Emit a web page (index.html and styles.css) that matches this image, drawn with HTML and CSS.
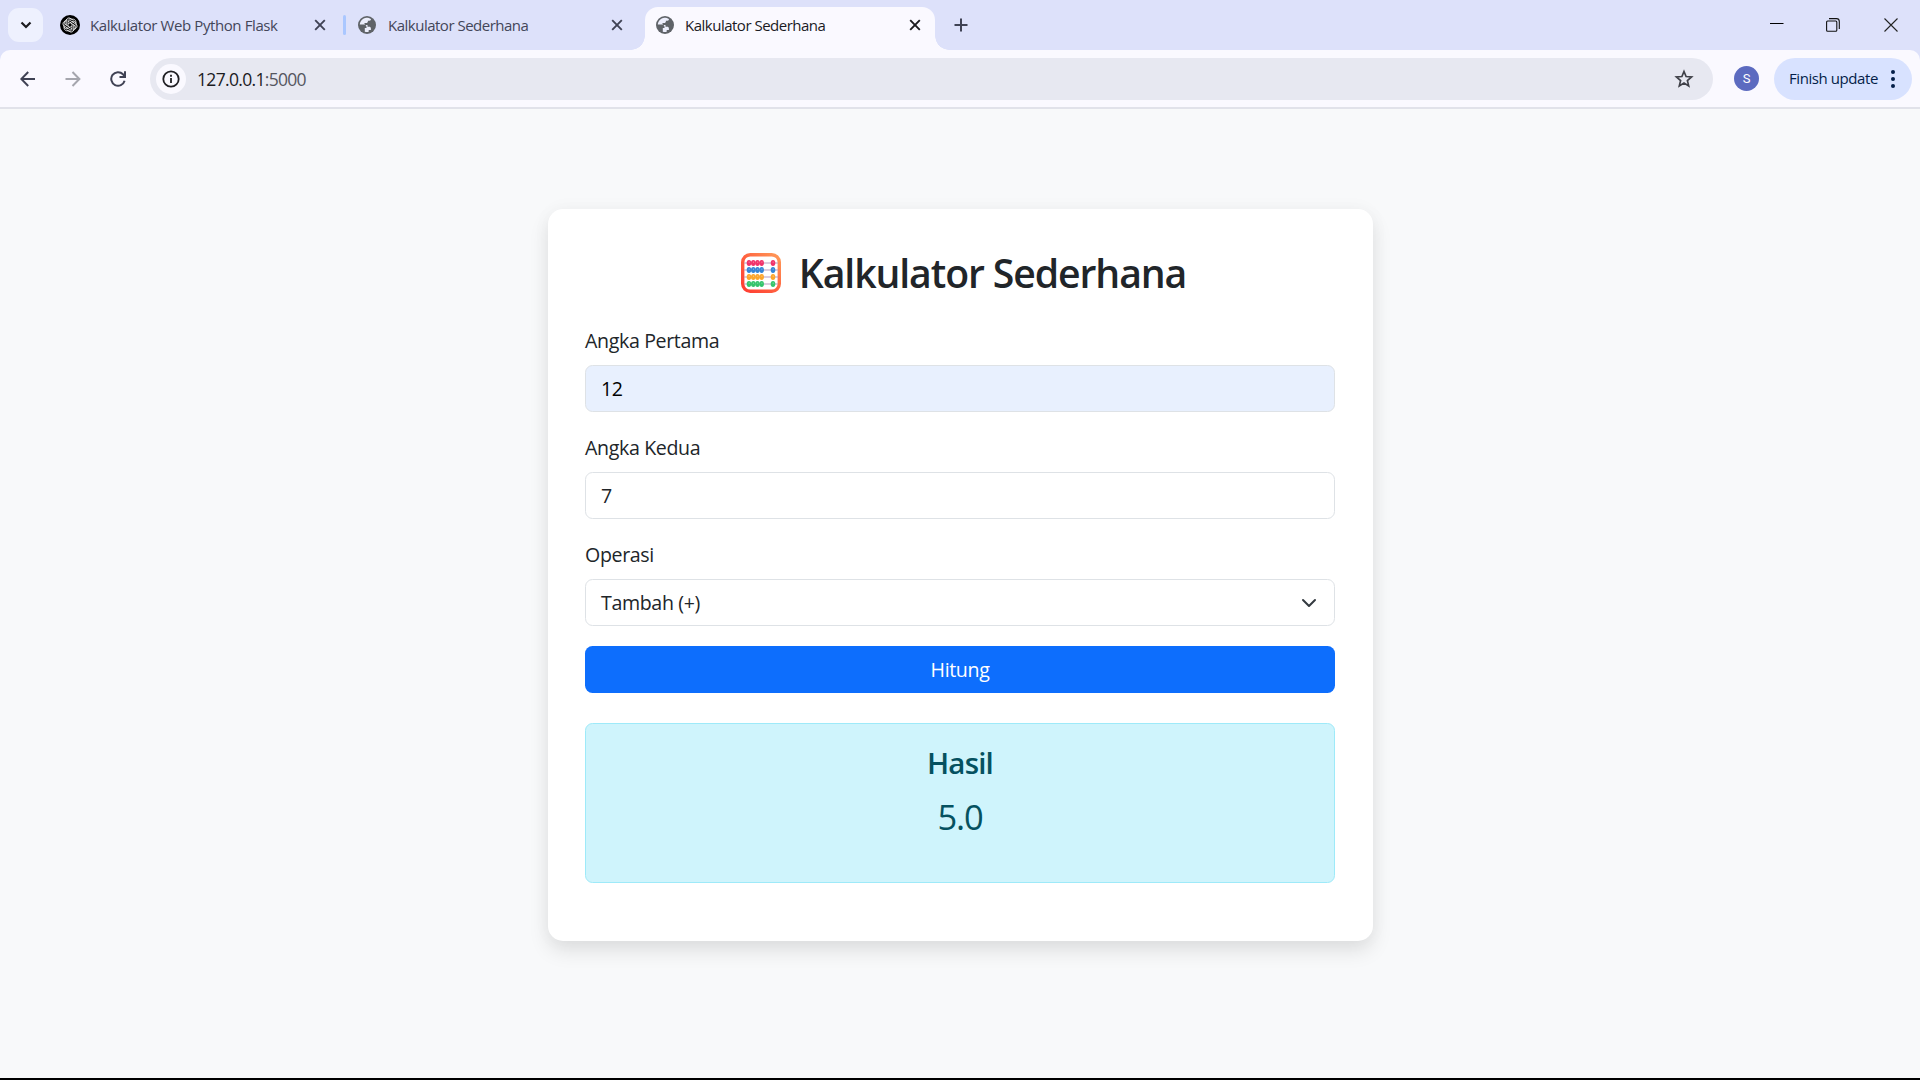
FILE: index.html
```html
<!DOCTYPE html>
<html lang="id">
<head>
<meta charset="utf-8">
<title>Kalkulator Sederhana</title>
<link rel="stylesheet" href="styles.css">
</head>
<body>
<svg width="0" height="0" class="defs">
  <defs>
    <symbol id="x" viewBox="0 0 12 12"><path d="M1.2 1.2l9.6 9.6M10.8 1.2l-9.6 9.6" fill="none" stroke="currentColor" stroke-width="1.9"/></symbol>
    <symbol id="globe" viewBox="0 0 18 18"><circle cx="9" cy="9" r="9" fill="#5f6368"/><path d="M7.4 1.9C4.4 2.5 2 5.2 1.8 8.6h4.1c1.5 0 2.6 1.1 2.6 2.5v.8H6.8v3.8c.7.3 1.5.4 2.2.4.6 0 1.1-.1 1.7-.3v-1.7h2.2v-1.7c0-1-.7-1.7-1.7-1.7H9.5V8.900h-3V7.100h1.700c1 0 1.700-.6 1.700-1.500v-.900h1.500c1.100 0 1.600-.7 1.500-1.600-1.600-1.100-3.700-1.500-5.500-1.200z" fill="#eceefc"/></symbol>
    <linearGradient id="frame" x1="0" y1="1" x2="1" y2="0"><stop offset="0" stop-color="#ff3c32"/><stop offset=".5" stop-color="#ff6240"/><stop offset="1" stop-color="#ff9a58"/></linearGradient>
    <g id="beads"><path d="M3 0H37" stroke="#b79cc0" stroke-width="1.2"/><g fill="currentColor"><ellipse cx="8" cy="0" rx="2.300" ry="3"/><ellipse cx="12.300" cy="0" rx="2.300" ry="3"/><ellipse cx="16.500" cy="0" rx="2.300" ry="3"/><ellipse cx="20.700" cy="0" rx="2.300" ry="3"/><ellipse cx="32" cy="0" rx="2.300" ry="3"/></g><path d="M8.200-1.500v1.500M12.500-1.500v1.500M16.700-1.500v1.500M20.900-1.500v1.500M32.200-1.500v1.500" stroke="#fff" stroke-opacity=".3"/></g>
  </defs>
</svg>
<header class="browser">
  <div class="tabstrip">
    <button class="tab-search"><svg width="12" height="8" viewBox="0 0 12 8"><path d="M1.500 1.500L6 6l4.500-4.500" fill="none" stroke="#1b1b1f" stroke-width="2.200"/></svg></button>
    <div class="tab tab-first">
      <svg class="favicon" width="20" height="20" viewBox="0 0 20 20"><circle cx="10" cy="10" r="10"/><g fill="none" stroke="#fff" stroke-width=".8"><path id="petal" d="M8 10.900V6.500c0-3 4-3.700 5.200-1.300M8 6.700l3.700-2.100c2.700-1.400 5 1.300 3.900 3.500"/><use href="#petal" transform="rotate(60 10 10)"/><use href="#petal" transform="rotate(120 10 10)"/><use href="#petal" transform="rotate(180 10 10)"/><use href="#petal" transform="rotate(240 10 10)"/><use href="#petal" transform="rotate(300 10 10)"/></g></svg>
      <span class="tab-title">Kalkulator Web Python Flask</span>
      <svg class="close" width="12" height="12"><use href="#x"/></svg>
    </div>
    <i class="divider"></i>
    <div class="tab tab-second">
      <svg class="favicon" width="18" height="18"><use href="#globe"/></svg>
      <span class="tab-title">Kalkulator Sederhana</span>
      <svg class="close" width="12" height="12"><use href="#x"/></svg>
    </div>
    <div class="tab tab-active">
      <svg class="favicon" width="18" height="18"><use href="#globe"/></svg>
      <span class="tab-title">Kalkulator Sederhana</span>
      <svg class="close" width="12" height="12"><use href="#x"/></svg>
    </div>
    <svg class="new-tab" width="14" height="14" viewBox="0 0 14 14"><path d="M7 .5v13M.5 7h13" stroke="#3f4254" stroke-width="2"/></svg>
    <div class="window-controls">
      <svg width="14" height="14" viewBox="0 0 14 14"><path d="M0 5.500h13.500" stroke="#000"/></svg>
      <svg width="14" height="14" viewBox="0 0 14 14"><g fill="none" stroke="#111" stroke-width="1.100"><rect x=".6" y="3" width="10.200" height="10.200" rx="1"/><path d="M3 .6h7.500a2.800 2.800 0 0 1 2.800 2.800V11"/></g></svg>
      <svg class="window-close" width="14" height="14" viewBox="0 0 14 14"><path d="M.5.500l13 13M13.500.500l-13 13" stroke="#222" stroke-width="1.100"/></svg>
    </div>
  </div>
  <div class="toolbar">
    <svg class="nav" width="16" height="16" viewBox="0 0 16 16"><path d="M15 8H1.500M8.200 1L1.300 8l6.900 7" fill="none" stroke="#3f4254" stroke-width="2"/></svg>
    <svg class="nav forward" width="16" height="16" viewBox="0 0 16 16"><path d="M.5 8h13.700M7.500 1l6.900 7-6.900 7" fill="none" stroke="#a5a6ae" stroke-width="2"/></svg>
    <svg class="nav reload" width="16" height="16" viewBox="0 0 16 16"><path d="M14.600 9.800A6.800 6.800 0 1 1 13 3.300l1.300 1.500M15 .2v5.700H9.500" fill="none" stroke="#3f4254" stroke-width="2"/></svg>
    <div class="omnibox">
      <span class="site-info"><svg width="18" height="18" viewBox="0 0 18 18"><circle cx="9" cy="9" r="7.700" fill="none" stroke="#1f1f23" stroke-width="1.800"/><path d="M9 8v5M9 4.800v2" stroke="#1f1f23" stroke-width="1.800"/></svg></span>
      <span class="url">127.0.0.1<span class="port">:5000</span></span>
      <svg class="star" width="20" height="20" viewBox="0 0 20 20"><path d="M10 2.500l2.100 5 5.500.5-4.200 3.600 1.300 5.300L10 14.100l-4.700 2.800 1.300-5.300L2.400 8l5.500-.5z" fill="none" stroke="#3f4048" stroke-width="1.700"/></svg>
    </div>
    <span class="avatar">S</span>
    <button class="update"><span class="update-text">Finish update</span><svg width="6" height="20" viewBox="0 0 6 20"><g fill="#041e49"><circle cx="3" cy="3" r="2"/><circle cx="3" cy="10" r="2"/><circle cx="3" cy="17" r="2"/></g></svg></button>
  </div>
</header>
<main class="page">
  <section class="card">
    <h1 class="title">
      <svg width="40" height="40" viewBox="0 0 40 40"><rect x="1.700" y="1.700" width="36.600" height="36.600" rx="7.500" fill="#fff" stroke="url(#frame)" stroke-width="3.400"/><use href="#beads" y="10" color="#f0336b"/><use href="#beads" y="17" color="#3484d6"/><use href="#beads" y="24" color="#fca62c"/><use href="#beads" y="31" color="#35c46c"/></svg>
      <span class="title-text">Kalkulator Sederhana</span>
    </h1>
    <form class="form">
      <div class="field">
        <label class="label">Angka Pertama</label>
        <div class="control autofilled">12</div>
      </div>
      <div class="field">
        <label class="label">Angka Kedua</label>
        <div class="control">7</div>
      </div>
      <div class="field">
        <label class="label">Operasi</label>
        <div class="control select"><span class="option">Tambah (+)</span><svg width="16" height="16" viewBox="0 0 16 16"><path d="m2 5 6 6 6-6" fill="none" stroke="#343a40" stroke-width="2" stroke-linecap="round" stroke-linejoin="round"/></svg></div>
      </div>
      <button type="button" class="submit">Hitung</button>
    </form>
    <div class="result">
      <h2 class="result-title">Hasil</h2>
      <p class="result-value">5.0</p>
    </div>
  </section>
</main>
</body>
</html>
```
FILE: styles.css
```css
* { box-sizing: border-box; }
body {
  margin: 0;
  width: 1920px;
  height: 1080px;
  overflow: hidden;
  display: flex;
  flex-direction: column;
  background: #f8f9fa;
  border-bottom: 2px solid #000;
  color: #212529;
  font-family: "Open Sans", "Noto Sans", sans-serif;
  font-size: 19.6px;
  letter-spacing: -0.36px;
  white-space: nowrap;
}
button { font: inherit; letter-spacing: inherit; border: 0; padding: 0; }
svg { flex: none; display: block; }
.defs { position: absolute; }

/* Browser frame */
.browser { flex: none; height: 109px; background: #dde1fa; border-bottom: 2px solid #e1e2ea; }
.tabstrip { display: flex; align-items: center; height: 50px; }
.tab-search {
  width: 35px; height: 34px; margin-left: 8px; border-radius: 11px;
  background: #eef1fe; display: flex; align-items: center; justify-content: center;
}
.tab { display: flex; align-items: center; color: #434659; font-size: 15px; }
.tab-title { line-height: 20px; }
.close { margin-left: auto; color: #3f4254; }
.tab-first { width: 266px; margin-left: 17px; }
.tab-first .tab-title { margin-left: 10px; letter-spacing: -0.4px; }
.divider { width: 3px; height: 20px; margin-left: 17px; background: #aac7ff; border-radius: 2px; }
.tab-second { width: 265px; margin-left: 12px; }
.tab-second .tab-title, .tab-active .tab-title { margin-left: 11px; letter-spacing: -0.5px; }
.tab-second .tab-title { margin-left: 12px; }
.tab-active {
  position: relative; width: 290px; height: 43px; margin: 7px 0 0 22px; padding: 0 14px 7px 11px;
  background: #faf9ff; border-radius: 13px 13px 0 0; color: #1b1b1f;
}
.tab-active .close { color: #1b1b1f; }
.tab-active::before, .tab-active::after {
  content: ""; position: absolute; bottom: 0; width: 14px; height: 14px;
}
.tab-active::before { left: -14px; background: radial-gradient(circle at 0 0, transparent 13.5px, #faf9ff 14px); }
.tab-active::after { right: -14px; background: radial-gradient(circle at 100% 0, transparent 13.5px, #faf9ff 14px); }
.new-tab { margin-left: 19px; }
.window-controls { display: flex; gap: 42px; margin-left: auto; padding-right: 22px; }
.window-close { margin-left: 2px; }
.toolbar {
  display: flex; align-items: center; height: 57px; padding: 0 8px 0 20px;
  background: #faf9ff; border-radius: 10px 10px 0 0;
}
.forward { margin-left: 29px; }
.reload { margin-left: 29px; }
.omnibox {
  display: flex; align-items: center; width: 1563px; height: 42px; margin-left: 24px;
  padding: 0 19px 0 6px; border-radius: 21px; background: #e7e8f1;
}
.site-info {
  width: 30px; height: 30px; border-radius: 50%; background: #faf9ff;
  display: flex; align-items: center; justify-content: center;
}
.url { margin: 1px 0 0 11px; font-size: 17.500px; letter-spacing: -0.68px; color: #1b1b1f; }
.port { color: #55565f; }
.star { margin-left: auto; }
.avatar {
  width: 25px; height: 25px; margin-left: 21px; border-radius: 50%; background: #5c6bc0; color: #fff;
  font: 13px/25px Roboto, sans-serif; letter-spacing: 0; text-align: center;
}
.update {
  display: flex; align-items: center; width: 138px; height: 42px; margin-left: auto;
  padding: 0 16px 0 15px; border-radius: 21px; background: #d8e2ff; color: #041e49;
  font-size: 15px; letter-spacing: -0.42px;
}
.update-text { padding-bottom: 2px; }
.update svg { margin-left: auto; }

/* Calculator */
.page { flex: 1; padding-top: 100px; }
.card {
  width: 825px; height: 732px; margin: 0 auto; padding: 37px 37.500px; border-radius: 15px;
  background: #fff; box-shadow: 0 10px 20px rgba(0, 0, 0, 0.1), 0 0 20px rgba(0, 0, 0, 0.03);
}
.title {
  display: flex; align-items: center; justify-content: center; gap: 18px;
  height: 54px; margin: 0; padding-left: 7px;
  font-size: 39.2px; font-weight: 600; line-height: 54px; letter-spacing: -1.1px;
}
.form { padding-top: 26px; }
.label { display: block; height: 30px; margin-bottom: 9px; line-height: 30px; }
.control {
  height: 47px; padding: 0 15px; line-height: 46px;
  border: 1px solid #dee2e6; border-radius: 7.500px; background: #fff;
}
.field { margin-bottom: 21px; }
.field:last-of-type { margin-bottom: 20px; }
.autofilled { background: #e8f0fe; color: #000; }
.select { display: flex; align-items: center; justify-content: space-between; padding-right: 17px; }
.submit {
  display: block; width: 100%; height: 47px; line-height: 47px; border-radius: 7.500px;
  background: #0d6efd; color: #fff; text-align: center;
}
.result {
  height: 160px; margin-top: 30px; padding-top: 20px; text-align: center; color: #055160;
  background: #cff4fc; border: 1px solid #9eeaf9; border-radius: 7.500px;
}
.result-title { margin: 0; font-size: 29.5px; font-weight: 600; line-height: 37px; letter-spacing: -0.8px; }
.result-value { margin: 10px 0 0; font-size: 34.5px; line-height: 52px; letter-spacing: -1.2px; }
```
